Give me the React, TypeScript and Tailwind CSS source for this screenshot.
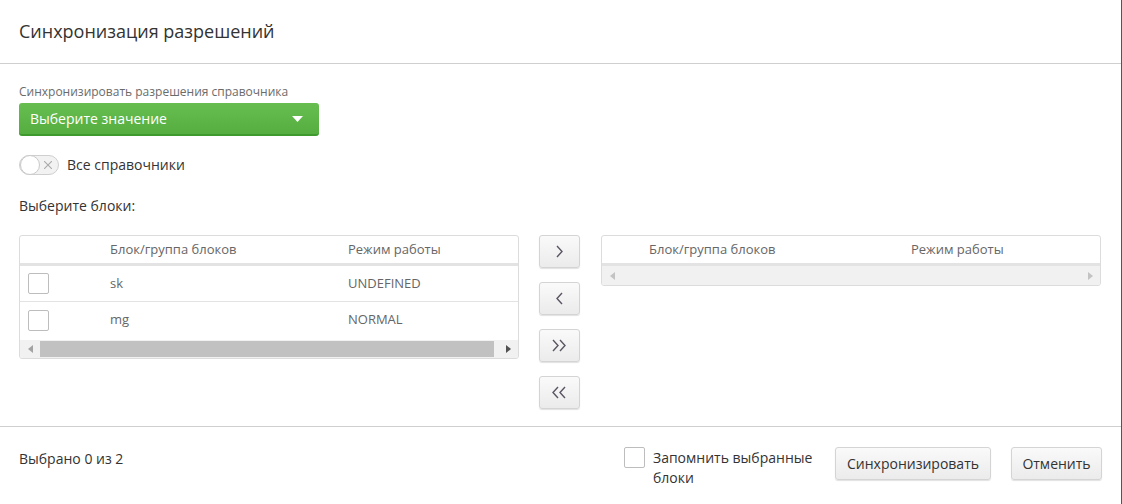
import React from "react";

const font = { fontFamily: '"Open Sans", "Noto Sans", sans-serif' };

function Chevron({ dir, double }: { dir: "left" | "right"; double?: boolean }) {
    const one = dir === "right" ? "M1 1 L6 6.5 L1 12" : "M6 1 L1 6.5 L6 12";
    return (
        <svg width={double ? 16 : 8} height="14" viewBox={double ? "0 0 16 14" : "0 0 8 14"} fill="none" stroke="#5b5563" strokeWidth="1.4">
            <path d={one} />
            {double && <path d={one} transform="translate(7 0)" />}
        </svg>
    );
}

function Checkbox() {
    return <span className="block w-[21px] h-[21px] rounded-[2px] border border-[#bdbdbd] bg-white" />;
}

function Scrollbar({ thumb, h }: { thumb?: boolean; h: string }) {
    return (
        <div className={`flex items-center bg-[#f1f1f1] ${h}`}>
            <div className="flex w-[20px] justify-center">
                <svg width="5" height="8" viewBox="0 0 5 8"><path d="M5 0 L0 4 L5 8 Z" fill={thumb ? "#a3a3a3" : "#c3c3c3"} /></svg>
            </div>
            <div className="flex-1 h-full py-[1px]">
                {thumb && <div className="h-full bg-[#c1c1c1] mr-[4px]" />}
            </div>
            <div className="flex w-[20px] justify-center">
                <svg width="5" height="8" viewBox="0 0 5 8"><path d="M0 0 L5 4 L0 8 Z" fill={thumb ? "#505050" : "#c3c3c3"} /></svg>
            </div>
        </div>
    );
}

function ArrowButton({ dir, double }: { dir: "left" | "right"; double?: boolean }) {
    return (
        <button className="flex h-[33px] w-[41px] items-center justify-center rounded-[3px] border border-[#d4d4d4] bg-gradient-to-b from-[#fafafa] to-[#ebebeb] shadow-[0_1px_1px_rgba(0,0,0,0.12)]">
            <Chevron dir={dir} double={double} />
        </button>
    );
}

export default function App() {
    const rows = [
        { name: "sk", mode: "UNDEFINED" },
        { name: "mg", mode: "NORMAL" },
    ];

    return (
        <div className="w-[1122px] h-[504px] bg-white text-[#333] border-r border-[#555] flex flex-col" style={font}>
            <div className="h-[64px] flex items-center px-[19px] border-b border-[#cfcfcf]">
                <h1 className="text-[18px] text-[#333]">Синхронизация разрешений</h1>
            </div>

            <div className="px-[19px] pt-[20px] pb-[17px] border-b border-[#cfcfcf]">
                <div className="text-[12px] leading-[16px] text-[#6b6b6b]">Синхронизировать разрешения справочника</div>
                <div className="mt-[3px] flex h-[33px] w-[300px] items-center justify-between rounded-[3px] bg-gradient-to-b from-[#67bd50] to-[#55ae41] border-b-2 border-[#3f9a2e] px-[11px] text-white">
                    <span className="text-[14px] font-medium">Выберите значение</span>
                    <svg width="11" height="6" viewBox="0 0 11 6" className="mr-[5px]"><path d="M0 0 L11 0 L5.5 6 Z" fill="#fff" /></svg>
                </div>

                <div className="mt-[19px] flex items-center gap-[8px]">
                    <div className="relative h-[20px] w-[40px] rounded-full border border-[#cfcfcf] bg-[#f2f2f2]">
                        <span className="absolute left-0 top-[-1px] h-[20px] w-[20px] rounded-full border border-[#c9c9c9] bg-white" />
                        <svg className="absolute right-[6px] top-[5px]" width="8" height="8" viewBox="0 0 8 8" stroke="#aaa" strokeWidth="1.1"><path d="M0 0 L8 8 M8 0 L0 8" /></svg>
                    </div>
                    <span className="text-[14px] leading-[20px]">Все справочники</span>
                </div>

                <div className="mt-[21px] text-[14px] leading-[20px]">Выберите блоки:</div>

                <div className="mt-[19px] flex items-start">
                    <div className="w-[500px] rounded-[3px] border border-[#dcdcdc] overflow-hidden">
                        <div className="flex h-[30px] items-center border-b-[3px] border-[#e3e3e3] text-[13px] text-[#666]">
                            <div className="w-[90px]" />
                            <div className="w-[238px]">Блок/группа блоков</div>
                            <div>Режим работы</div>
                        </div>
                        {rows.map((r, i) => (
                            <div key={r.name} className={`flex h-[36px] items-center text-[13px] text-[#666] ${i === 0 ? "border-b border-[#e3e3e3]" : ""}`}>
                                <div className="w-[90px] pl-[8px]"><Checkbox /></div>
                                <div className="w-[238px]">{r.name}</div>
                                <div>{r.mode}</div>
                            </div>
                        ))}
                        <div className="h-[2px]" />
                        <Scrollbar thumb h="h-[18px]" />
                    </div>

                    <div className="ml-[20px] flex flex-col gap-[14px]">
                        <ArrowButton dir="right" />
                        <ArrowButton dir="left" />
                        <ArrowButton dir="right" double />
                        <ArrowButton dir="left" double />
                    </div>

                    <div className="ml-[21px] w-[500px] rounded-[3px] border border-[#dcdcdc] overflow-hidden">
                        <div className="flex h-[30px] items-center border-b-[3px] border-[#e3e3e3] text-[13px] text-[#666]">
                            <div className="w-[47px]" />
                            <div className="w-[262px]">Блок/группа блоков</div>
                            <div>Режим работы</div>
                        </div>
                        <Scrollbar h="h-[19px]" />
                    </div>
                </div>
            </div>

            <div className="flex items-start px-[19px] pt-[20px]">
                <div className="mt-[1px] text-[14px] leading-[20px] pt-[1px]">Выбрано 0 из 2</div>
                <div className="ml-auto flex items-start">
                    <Checkbox />
                    <div className="ml-[8px] w-[170px] text-[14px] leading-[20px] pt-[1px]">Запомнить выбранные блоки</div>
                    <button className="ml-[12px] h-[33px] w-[156px] rounded-[3px] border border-[#d4d4d4] bg-gradient-to-b from-[#fafafa] to-[#ebebeb] text-[14px] text-[#333] shadow-[0_1px_1px_rgba(0,0,0,0.12)]">Синхронизировать</button>
                    <button className="ml-[20px] h-[33px] w-[91px] rounded-[3px] border border-[#d4d4d4] bg-gradient-to-b from-[#fafafa] to-[#ebebeb] text-[14px] text-[#333] shadow-[0_1px_1px_rgba(0,0,0,0.12)]">Отменить</button>
                </div>
            </div>
        </div>
    );
}
